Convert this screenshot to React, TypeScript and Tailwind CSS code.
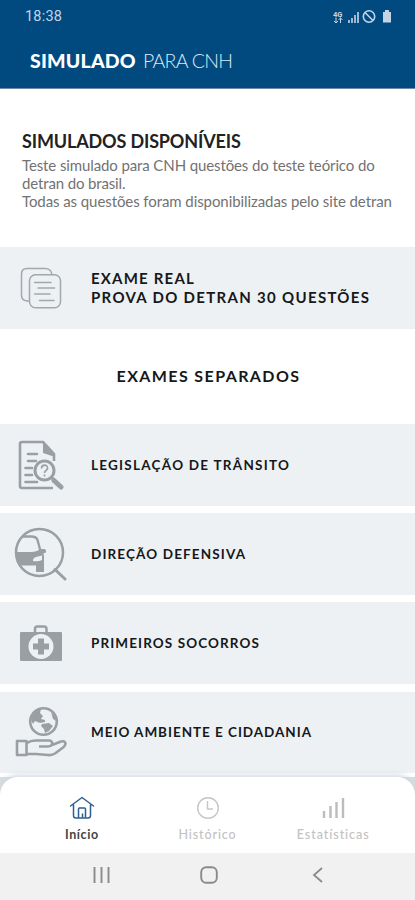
import type { ReactNode } from "react";

function FilesIcon() {
  return (
    <svg width="42" height="42" viewBox="0 0 42 42" fill="none" stroke="#a3a8ab" strokeWidth="1.500" strokeLinecap="round">
      <path d="M9 34H7Q1.500 33.500 1.500 28V7Q1.500 1.500 7 1.500H25Q31 1.500 32 7.500" />
      <rect x="9.500" y="7.700" width="31" height="33" rx="6" />
      <path d="M14.500 15.500H31M18 21H34.500M14.500 27H30M19.500 33.500H34" />
    </svg>
  );
}

function LawIcon() {
  return (
    <svg width="46" height="50" viewBox="0 0 46 50" fill="none" stroke="#9a9fa3" strokeWidth="2.600">
      <path d="M36 21V14L25 2H4Q2 2 2 4V46Q2 48 4 48H35M36 41V43" />
      <path d="M25 1L37 14V17L25 13Z" fill="#9a9fa3" stroke="none" />
      <path d="M10 14H19M10 21H18M7.500 28H14M7.500 35H14M7.500 42H19" strokeLinecap="round" />
      <circle cx="26.500" cy="30.500" r="9.500" fill="#edf1f4" strokeWidth="3" />
      <path d="M33 37L36 40" strokeWidth="3" />
      <path d="M36 40.500L43 47" strokeWidth="5" strokeLinecap="round" />
      <path d="M23.500 28.500C23.500 24 30 24 29.500 28.500C29 30.500 26.500 30.500 26.500 33M26.500 34.500V36.500" strokeWidth="1.700" />
    </svg>
  );
}

function CarIcon() {
  return (
    <svg width="54" height="54" viewBox="0 0 54 54" fill="none" stroke="#9a9fa3">
      <path d="M8 9.500H17Q22.500 9.500 23.500 13L26.500 24" strokeWidth="2.400" />
      <path d="M2 25H17Q23 25 26 22H31Q33 24 31.500 26H29.500L30 30V45H22V38.500H6Q2.500 32 2 25Z" fill="#9a9fa3" stroke="none" />
      <path d="M19 34Q18.500 31.500 22 30L28 28.500V33Q24 35 19 34Z" fill="#edf1f4" stroke="none" />
      <circle cx="25.500" cy="25.500" r="23.500" strokeWidth="2.500" />
      <path d="M41 42.500L51 52" strokeWidth="3" strokeLinecap="round" />
    </svg>
  );
}

function AidIcon() {
  return (
    <svg width="42" height="36" viewBox="0 0 42 36" fill="none">
      <path d="M15 7V4Q15 1.500 17.500 1.500H24Q26.500 1.500 26.500 4V7" stroke="#9a9fa3" strokeWidth="2.500" />
      <rect y="7" width="42" height="29" rx="1" fill="#9a9fa3" />
      <circle cx="21" cy="21.500" r="12.500" fill="#edf1f4" />
      <path d="M18 13.500H24V18.500H29V24.500H24V29.500H18V24.500H13V18.500H18Z" fill="#9a9fa3" />
    </svg>
  );
}

function EarthIcon() {
  return (
    <svg width="52" height="52" viewBox="0 0 52 52" fill="none" stroke="#9a9fa3" strokeWidth="2.600" strokeLinejoin="round">
      <circle cx="28.500" cy="15.500" r="13.300" />
      <path d="M16 14Q17 5 26 3L25 7L28 10L26 13L30 14V16L25 17L20 15L18 18Z" fill="#9a9fa3" stroke="none" />
      <path d="M27 18L34 17L38 20L34 25L30 27L29 23L26 20ZM36 6L40 10L41 15L38 13Z" fill="#9a9fa3" stroke="none" />
      <rect x="2" y="35" width="9.500" height="14" />
      <path d="M12 37Q16 34 22 34.500H34Q38 35 37 38.500Q36 40.500 32 40.500H24M37 39L46 35.500Q50 34.500 50.500 37.500Q50.500 40 46 43L40 47.500Q37 49.500 33 49L21 48H12" />
    </svg>
  );
}

function ExamRow({ icon, children }: { icon: ReactNode; children: ReactNode }) {
  return (
    <div className="flex h-[81.500px] shrink-0 items-center bg-[#edf1f4]">
      <div className="flex w-[91px] shrink-0 justify-center pr-[9px]">{icon}</div>
      <div className="whitespace-nowrap text-[13.500px] font-bold text-[#16181a]">{children}</div>
    </div>
  );
}

export default function App() {
  return (
    <div className="flex h-[900px] w-[415px] flex-col overflow-hidden bg-white font-['Lato',sans-serif]">
      <header className="h-[89px] shrink-0 border-b border-[#6b8aa9] bg-[#004a80]">
        <div className="flex h-[33px] items-center justify-between pl-[25px] pr-[23px] text-[#c3d5e4]">
          <span className="font-['Roboto',sans-serif] text-[14.500px] tracking-[0.200px]">18:38</span>
          <svg width="59" height="14" viewBox="0 0 59 14" fill="none" stroke="currentColor">
            <text x="0" y="6.500" fontFamily="Roboto, sans-serif" fontSize="7.500" fontWeight="700" fill="currentColor" stroke="none">4G</text>
            <path d="M3 7.500V13M1 11L3 13L5 11M7.500 13V7.500M5.500 10L7.500 8L9.500 10" />
            <path d="M16 13V10M19 13V8M22 13V5M25 13V2" strokeWidth="1.600" />
            <circle cx="36" cy="6.500" r="5.700" strokeWidth="1.600" />
            <path d="M32 2.500L40 10.500" strokeWidth="1.600" />
            <path d="M50 2H52V0H56V2H58V12.500H50Z" fill="currentColor" stroke="none" />
          </svg>
        </div>
        <h1 className="flex h-[55px] items-center gap-[7px] whitespace-nowrap pl-[30px] text-[19.500px] text-white">
          <span className="font-black tracking-[0.200px]">SIMULADO</span>
          <span className="font-light tracking-[-0.700px] text-[#dce8f2]">PARA CNH</span>
        </h1>
      </header>

      <section className="h-[158px] shrink-0 whitespace-nowrap pl-[22px] pt-[41px]">
        <h2 className="text-[18px] font-bold leading-[22px] tracking-[-0.150px] text-[#222]">SIMULADOS DISPONÍVEIS</h2>
        <p className="pt-[3.500px] text-[15px] leading-[18.300px] text-[#727272]">
          <span className="tracking-[-0.110px]">Teste simulado para CNH questões do teste teórico do</span><br />
          <span className="tracking-[-0.140px]">detran do brasil.</span><br />
          <span className="tracking-[-0.080px]">Todas as questões foram disponibilizadas pelo site detran</span>
        </p>
      </section>

      <ExamRow icon={<FilesIcon />}>
        <div className="text-[15px] leading-[18.500px]">
          <div className="tracking-[1.200px]">EXAME REAL</div>
          <div className="tracking-[1.310px]">PROVA DO DETRAN 30 QUESTÕES</div>
        </div>
      </ExamRow>

      <h2 className="flex h-[95.500px] shrink-0 items-center justify-center pb-px pl-[2px] text-[16px] font-bold tracking-[1.400px] text-[#16181a]">EXAMES SEPARADOS</h2>

      <div className="flex h-[352.500px] shrink-0 flex-col gap-[7.700px] overflow-hidden">
        <ExamRow icon={<LawIcon />}><span className="tracking-[1.250px]">LEGISLAÇÃO DE TRÂNSITO</span></ExamRow>
        <ExamRow icon={<CarIcon />}><span className="tracking-[1.130px]">DIREÇÃO DEFENSIVA</span></ExamRow>
        <ExamRow icon={<AidIcon />}><span className="tracking-[1.100px]">PRIMEIROS SOCORROS</span></ExamRow>
        <ExamRow icon={<EarthIcon />}><span className="tracking-[0.960px]">MEIO AMBIENTE E CIDADANIA</span></ExamRow>
      </div>

      <div className="h-[76px] shrink-0 bg-[#d8dcdd]">
        <nav className="flex h-full items-end rounded-t-[18px] bg-white px-[19px] pb-[10px] text-[12.500px] font-medium leading-[16px] text-[#c2c2c2] shadow-[0_-2px_6px_#cfd8de]">
          <div className="flex flex-1 flex-col items-center gap-[7px] text-[#444]">
            <svg width="26" height="24" viewBox="0 0 26 24" fill="none" stroke="#2d6091" strokeWidth="1.500" strokeLinejoin="round" strokeLinecap="round">
              <path d="M1.500 10L13 1.500L24.500 10M4.500 8.500V19.500Q4.500 22 7 22H19Q21.500 22 21.500 19.500V8.500M9.500 22V13Q9.500 12 10.500 12H15.500Q16.500 12 16.500 13V22M13.500 21V18" />
            </svg>
            <span className="font-bold tracking-[0.600px]">Início</span>
          </div>
          <div className="flex flex-1 flex-col items-center gap-[7px]">
            <svg width="24" height="24" viewBox="0 0 24 24" fill="none" stroke="#c6c6c6" strokeWidth="1.400">
              <circle cx="12" cy="12" r="10.300" /><path d="M11.500 5V13H17" />
            </svg>
            <span className="tracking-[0.900px]">Histórico</span>
          </div>
          <div className="flex flex-1 flex-col items-center gap-[7px]">
            <svg width="24" height="24" viewBox="0 0 24 24" stroke="#bcbcbc" strokeWidth="2.400">
              <path d="M3 22V15M9.500 22V10M15.500 22V6M22 22V2" />
            </svg>
            <span className="tracking-[0.950px]">Estatísticas</span>
          </div>
        </nav>
      </div>

      <footer className="flex h-[48px] shrink-0 items-center bg-[#f1f1f1] pb-[4px] pl-[92px] text-[#8a8a8a]">
        <svg width="18" height="18" viewBox="0 0 18 18" stroke="currentColor" strokeWidth="1.900"><path d="M2.500 1V17M9.500 1V17M16.500 1V17" /></svg>
        <svg className="ml-[90px]" width="18" height="18" viewBox="0 0 18 18" fill="none" stroke="currentColor" strokeWidth="1.900"><rect x="1.200" y="1.200" width="15.600" height="15.600" rx="5" /></svg>
        <svg className="ml-[93px]" width="14" height="18" viewBox="0 0 14 18" fill="none" stroke="currentColor" strokeWidth="1.800"><path d="M11 2L3 9L11 16" /></svg>
      </footer>
    </div>
  );
}
